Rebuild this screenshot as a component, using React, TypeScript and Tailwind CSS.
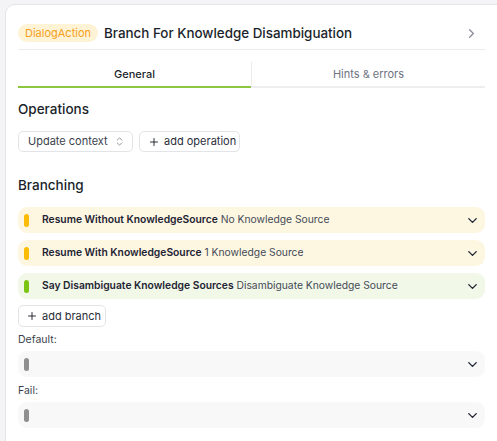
import React from 'react';
import { ChevronRight, ChevronDown, ChevronsUpDown, Plus } from 'lucide-react';

type Branch = { title: string; desc: string; tone: 'yellow' | 'green' };

const branches: Branch[] = [
  { title: 'Resume Without KnowledgeSource', desc: 'No Knowledge Source', tone: 'yellow' },
  { title: 'Resume With KnowledgeSource', desc: '1 Knowledge Source', tone: 'yellow' },
  { title: 'Say Disambiguate Knowledge Sources', desc: 'Disambiguate Knowledge Source', tone: 'green' },
];

const BranchRow: React.FC<{ branch?: Branch }> = ({ branch }) => {
  const bg = !branch ? 'bg-[#f8f8f8]' : branch.tone === 'yellow' ? 'bg-[#fdf7e2]' : 'bg-[#f1f8e8]';
  const pill = !branch ? 'bg-[#8f8f8f]' : branch.tone === 'yellow' ? 'bg-[#fbbc05]' : 'bg-[#7cc414]';
  return (
    <div className={`h-[26px] rounded-[9px] ${bg} flex items-center pl-[6px] pr-[5px]`}>
      <div className={`w-[5px] h-[13px] rounded-full ${pill}`} />
      <div className="flex-1 pl-[13px] text-[10.3px] text-[#1f2433] truncate">
        {branch && (
          <>
            <span className="font-semibold">{branch.title}</span>{' '}
            <span className="text-[#454a57]">{branch.desc}</span>
          </>
        )}
      </div>
      <ChevronDown size={15} strokeWidth={2.2} className="text-[#1f2433]" />
    </div>
  );
};

export default function App() {
  return (
    <div className="h-[441px] w-[497px] overflow-hidden bg-[#f4f4f6] pl-[5px] pt-[4px]" style={{ fontFamily: 'Inter, "Noto Sans", sans-serif' }}>
      <div className="w-[520px] h-[460px] bg-white border border-[#e4e5e9] rounded-[10px] pl-[12px] pt-[19px]">
        <div className="w-[467px]">
          {/* Header */}
          <div className="flex items-center h-[18px]">
            <span className="h-[18px] px-[7px] rounded-full bg-[#fff3d6] text-[#f6a01a] text-[11px] flex items-center whitespace-nowrap">DialogAction</span>
            <span className="ml-[6px] text-[13.4px] font-medium text-[#1b1f2b] whitespace-nowrap">Branch For Knowledge Disambiguation</span>
            <ChevronRight size={15} className="ml-auto mr-[6px] text-[#8a8d96]" />
          </div>
          <div className="mt-[7px] border-b border-[#ececef]" />

          {/* Tabs */}
          <div className="mt-[12px] flex h-[26px] text-[11px]">
            <div className="flex-1 flex items-center justify-center border-b-2 border-[#8dc63f] text-[#1b1f2b] font-medium">General</div>
            <div className="flex-1 flex items-center justify-center border-b-2 border-[#eeeef0] border-l border-l-[#ececef] text-[#6e7280]">Hints &amp; errors</div>
          </div>

          {/* Operations */}
          <h3 className="mt-[12px] text-[13.5px] font-medium text-[#1b1f2b] leading-[18px]">Operations</h3>
          <div className="mt-[13px] flex gap-[6px]">
            <div className="h-[21px] w-[115px] border border-[#e3e4e8] rounded-[5px] flex items-center pl-[9px] pr-[7px] text-[11px] text-[#3b3f4c] whitespace-nowrap">
              <span>Update context</span>
              <ChevronsUpDown size={11} className="ml-auto text-[#8a8d96]" />
            </div>
            <div className="h-[21px] w-[101px] border border-[#e3e4e8] rounded-[5px] flex items-center pl-[8px] text-[11px] text-[#2a2e3a] whitespace-nowrap">
              <Plus size={12} strokeWidth={2} className="mr-[4px]" />
              <span>add operation</span>
            </div>
          </div>

          {/* Branching */}
          <h3 className="mt-[24px] text-[13.5px] font-medium text-[#1b1f2b] leading-[18px]">Branching</h3>
          <div className="mt-[13px] flex flex-col gap-[7px]">
            {branches.map((b) => (
              <BranchRow key={b.title} branch={b} />
            ))}
          </div>
          <div className="mt-[6px] h-[22px] w-[88px] border border-[#e3e4e8] rounded-[5px] flex items-center pl-[7px] text-[11px] text-[#2a2e3a] whitespace-nowrap">
            <Plus size={12} strokeWidth={2} className="mr-[4px]" />
            <span>add branch</span>
          </div>

          <div className="mt-[6px] text-[10.5px] text-[#3b3f4c] leading-[14px]">Default:</div>
          <div className="mt-[4px]"><BranchRow /></div>
          <div className="mt-[7px] text-[10.5px] text-[#3b3f4c] leading-[14px]">Fail:</div>
          <div className="mt-[4px]"><BranchRow /></div>
        </div>
      </div>
    </div>
  );
}
